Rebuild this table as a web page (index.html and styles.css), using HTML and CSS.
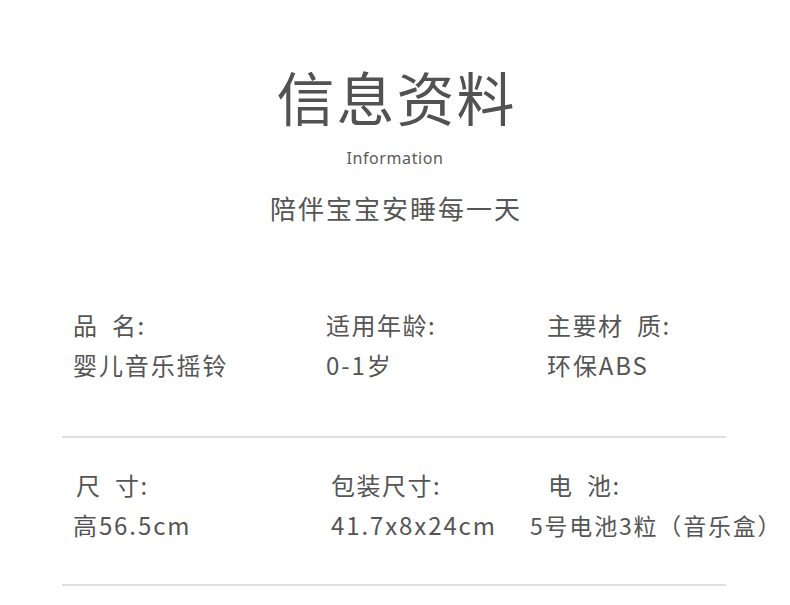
FILE: index.html
```html
<!DOCTYPE html>
<html lang="zh">
<head>
	<meta charset="utf-8" />
	<title>信息资料</title>
	<link rel="stylesheet" href="styles.css">
</head>
<body>
	<header class="intro">
		<h1>信息资料</h1>
		<p class="en">Information</p>
		<p class="slogan">陪伴宝宝安睡每一天</p>
	</header>

	<section class="specs specs-first">
		<div class="item">
			<span class="label">品&ensp;名:</span>
			<span class="value">婴儿音乐摇铃</span>
		</div>
		<div class="item">
			<span class="label">适用年龄:</span>
			<span class="value">0-1岁</span>
		</div>
		<div class="item">
			<span class="label">主要材&ensp;质:</span>
			<span class="value">环保ABS</span>
		</div>
	</section>

	<section class="specs specs-second">
		<div class="item">
			<span class="label label-in">尺&ensp;寸:</span>
			<span class="value">高56.5cm</span>
		</div>
		<div class="item">
			<span class="label">包装尺寸:</span>
			<span class="value">41.7x8x24cm</span>
		</div>
		<div class="item">
			<span class="label label-in">电&ensp;池:</span>
			<span class="value value-small">5号电池3粒（音乐盒）</span>
		</div>
	</section>
</body>
</html>
```

FILE: styles.css
```css
body {
	margin: 0;
	background-color: #ffffff;
	color: #555555;
	font-family: "Noto Sans CJK SC", "Noto Sans", sans-serif;
}

/* Heading block
 * ============= */

.intro {
	text-align: center;
	padding-top: 57px;
}

.intro h1 {
	margin: 0;
	font-size: 58px;
	font-weight: 400;
	line-height: 78px;
	letter-spacing: 2px;
	padding-left: 3px;
	color: #525252;
}

.intro .en {
	margin: 0;
	padding-top: 9px;
	font-family: "Noto Sans", sans-serif;
	font-size: 16px;
	line-height: 28px;
	letter-spacing: 0.6px;
	color: #5a5a5a;
}

.intro .slogan {
	margin: 0;
	padding-top: 19px;
	font-size: 26px;
	line-height: 34px;
	letter-spacing: 2px;
	padding-left: 2px;
}

/* Spec table
 * ========== */

.specs {
	display: grid;
	width: 664px;
	margin-left: 62px;
	box-sizing: border-box;
	border-bottom: 2px solid #dedede;
}

.specs-first {
	margin-top: 82px;
	padding: 0 0 53px 11px;
	grid-template-columns: 253px 221px 1fr;
}

.specs-second {
	padding: 29px 0 41px 11px;
	grid-template-columns: 258px 199px 1fr;
}

.item {
	display: flex;
	flex-direction: column;
	gap: 4px;
}

.label, .value {
	font-size: 24px;
	line-height: 36px;
	letter-spacing: 1.5px;
	white-space: nowrap;
}

.value {
	letter-spacing: 1.9px;
}

.label-in {
	padding-left: 3px;
}

.specs-second .item:last-child .label-in {
	padding-left: 18px;
}

.value-small {
	font-size: 23px;
	letter-spacing: 1.8px;
}
```
